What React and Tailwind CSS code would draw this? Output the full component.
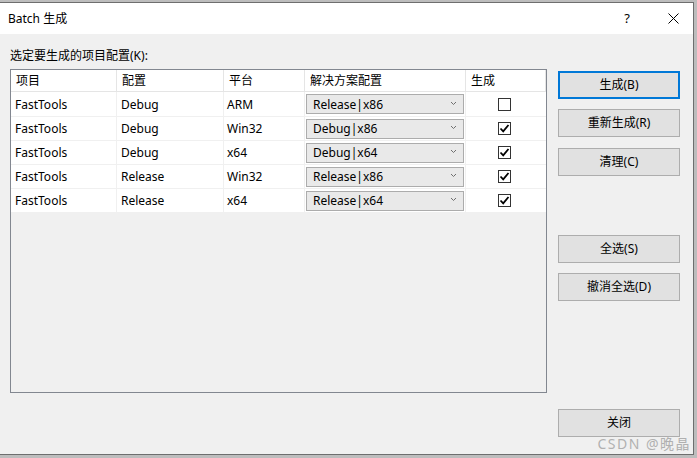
import React from "react";

const rows = [
  ["FastTools", "Debug", "ARM", "Release|x86", false],
  ["FastTools", "Debug", "Win32", "Debug|x86", true],
  ["FastTools", "Debug", "x64", "Debug|x64", true],
  ["FastTools", "Release", "Win32", "Release|x86", true],
  ["FastTools", "Release", "x64", "Release|x64", true],
];

function Check({ checked }) {
  return (
    <div className="w-[13px] h-[13px] border border-[#333333] bg-white flex items-center justify-center">
      {checked && (
        <svg width="11" height="11" viewBox="0 0 11 11">
          <path d="M1.5 5.5 L4.2 8.3 L9.5 2" fill="none" stroke="#000" strokeWidth="1.8" />
        </svg>
      )}
    </div>
  );
}

function Btn({ children, primary, className = "" }) {
  return (
    <div
      className={
        "w-[122px] h-[28px] bg-[#e1e1e1] flex items-center justify-center text-[12px] text-black " +
        (primary ? "border-2 border-[#0078d7] " : "border border-[#adadad] ") +
        className
      }
    >
      {children}
    </div>
  );
}

export default function App() {
  const font = { fontFamily: '"Noto Sans", "Noto Sans CJK SC", sans-serif' };
  return (
    <div className="w-[697px] h-[458px] bg-[#bdbdbd] pt-[2px] pr-[3px] pb-[3px] overflow-hidden" style={font}>
      <div className="w-[694px] h-[453px] border border-l-0 border-[#6e6e6e] bg-[#f0f0f0] flex flex-col">
        <div className="h-[31px] bg-white flex items-center pl-[8px] pr-[14px] text-[12px] text-black shrink-0">
          <span className="leading-none">Batch 生成</span>
          <div className="flex-1" />
          <span className="text-[13px] leading-none mr-[38px]">?</span>
          <svg width="11" height="11" viewBox="0 0 11 11">
            <path d="M0.5 0.5 L10.5 10.5 M10.5 0.5 L0.5 10.5" stroke="#000" strokeWidth="1" />
          </svg>
        </div>
        <div className="flex flex-1 relative">
          <div className="pl-[10px] flex flex-col">
            <div className="h-[16px] mt-[14px] text-[12px] leading-[16px] text-black">选定要生成的项目配置(K):</div>
            <div className="mt-[5px] w-[537px] h-[324px] border border-[#828790] bg-[#f0f0f0] text-[12px] text-black">
              <div className="flex h-[22px] bg-white border-b border-[#e5e5e5]">
                {[
                  ["项目", "w-[106px]"],
                  ["配置", "w-[107px]"],
                  ["平台", "w-[81px]"],
                  ["解决方案配置", "w-[161px]"],
                  ["生成", "w-[80px]"],
                ].map(([t, w], i) => (
                  <div key={i} className={w + " border-r border-[#e5e5e5] pl-[5px] flex items-center leading-none"}>
                    {t}
                  </div>
                ))}
              </div>
              {rows.map((r, i) => (
                <div key={i} className={(i === 0 ? "h-[25px] " : "h-[24px] ") + "flex bg-white border-b border-[#f0f0f0]"}>
                  <div className="w-[106px] border-r border-[#f0f0f0] pl-[4px] pt-[1px] flex items-center">{r[0]}</div>
                  <div className="w-[107px] border-r border-[#f0f0f0] pl-[4px] pt-[1px] flex items-center">{r[1]}</div>
                  <div className="w-[81px] border-r border-[#f0f0f0] pl-[3px] pt-[1px] flex items-center">{r[2]}</div>
                  <div className="w-[161px] border-r border-[#f0f0f0] pl-[1px] flex items-center">
                    <div className="w-[158px] h-[20px] border border-[#acacac] bg-[#e9e9e9] flex items-center pl-[6px] pr-[6px] pt-[1px]">
                      <span className="flex-1">{r[3]}</span>
                      <svg width="7" height="5" viewBox="0 0 7 5" className="mb-[3px]">
                        <path d="M1 1 L3.5 3.5 L6 1" fill="none" stroke="#707070" strokeWidth="1" />
                      </svg>
                    </div>
                  </div>
                  <div className="w-[80px] flex items-center pl-[32px]">
                    <Check checked={r[4]} />
                  </div>
                </div>
              ))}
            </div>
          </div>
          <div className="ml-[11px] flex flex-col pt-[37px]">
            <Btn primary>生成(B)</Btn>
            <Btn className="mt-[10px]">重新生成(R)</Btn>
            <Btn className="mt-[11px]">清理(C)</Btn>
            <Btn className="mt-[59px]">全选(S)</Btn>
            <Btn className="mt-[10px]">撤消全选(D)</Btn>
            <Btn className="mt-[108px]">关闭</Btn>
          </div>
          <div className="absolute right-[2px] bottom-[3px] text-[14px] tracking-[1.5px] leading-none text-[#b0b0b0]">CSDN @晚晶</div>
        </div>
      </div>
    </div>
  );
}
